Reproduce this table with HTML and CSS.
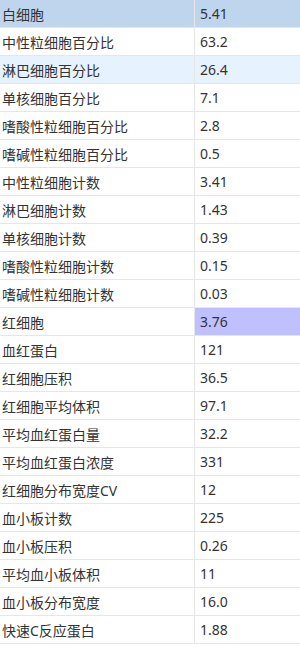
FILE: index.html
```html
<!DOCTYPE html>
<html lang="zh-CN">
<head>
<meta charset="utf-8">
<link rel="stylesheet" href="styles.css">
</head>
<body>
<div class="list">
  <div class="row row-head"><div class="name">白细胞</div><div class="val">5.41</div></div>
  <div class="row"><div class="name">中性粒细胞百分比</div><div class="val">63.2</div></div>
  <div class="row row-hover"><div class="name">淋巴细胞百分比</div><div class="val">26.4</div></div>
  <div class="row"><div class="name">单核细胞百分比</div><div class="val">7.1</div></div>
  <div class="row"><div class="name">嗜酸性粒细胞百分比</div><div class="val">2.8</div></div>
  <div class="row"><div class="name">嗜碱性粒细胞百分比</div><div class="val">0.5</div></div>
  <div class="row"><div class="name">中性粒细胞计数</div><div class="val">3.41</div></div>
  <div class="row"><div class="name">淋巴细胞计数</div><div class="val">1.43</div></div>
  <div class="row"><div class="name">单核细胞计数</div><div class="val">0.39</div></div>
  <div class="row"><div class="name">嗜酸性粒细胞计数</div><div class="val">0.15</div></div>
  <div class="row"><div class="name">嗜碱性粒细胞计数</div><div class="val">0.03</div></div>
  <div class="row"><div class="name">红细胞</div><div class="val val-mark">3.76</div></div>
  <div class="row"><div class="name">血红蛋白</div><div class="val">121</div></div>
  <div class="row"><div class="name">红细胞压积</div><div class="val">36.5</div></div>
  <div class="row"><div class="name">红细胞平均体积</div><div class="val">97.1</div></div>
  <div class="row"><div class="name">平均血红蛋白量</div><div class="val">32.2</div></div>
  <div class="row"><div class="name">平均血红蛋白浓度</div><div class="val">331</div></div>
  <div class="row"><div class="name">红细胞分布宽度CV</div><div class="val">12</div></div>
  <div class="row"><div class="name">血小板计数</div><div class="val">225</div></div>
  <div class="row"><div class="name">血小板压积</div><div class="val">0.26</div></div>
  <div class="row"><div class="name">平均血小板体积</div><div class="val">11</div></div>
  <div class="row"><div class="name">血小板分布宽度</div><div class="val">16.0</div></div>
  <div class="row"><div class="name">快速C反应蛋白</div><div class="val">1.88</div></div>
</div>
</body>
</html>
```
FILE: styles.css
```css
html, body {
  margin: 0;
  padding: 0;
  background: #ffffff;
}
body {
  width: 300px;
  font-family: "Noto Sans", "Noto Sans CJK SC", sans-serif;
  font-size: 14px;
  color: #333333;
}
.list {
  display: flex;
  flex-direction: column;
}
.row {
  display: grid;
  grid-template-columns: 195px 1fr;
  height: 28px;
  box-sizing: border-box;
  border-bottom: 1px solid #e6e6e6;
}
.row-head {
  background: #bed5ed;
}
.row-hover {
  background: #e6f2fd;
}
.name, .val {
  display: flex;
  align-items: center;
  white-space: nowrap;
  overflow: hidden;
}
.name {
  box-sizing: border-box;
  padding-left: 2px;
  border-right: 1px solid #e6e6e6;
}
.val {
  padding-left: 5px;
}
.val-mark {
  background: #c0c0ff;
}
```
